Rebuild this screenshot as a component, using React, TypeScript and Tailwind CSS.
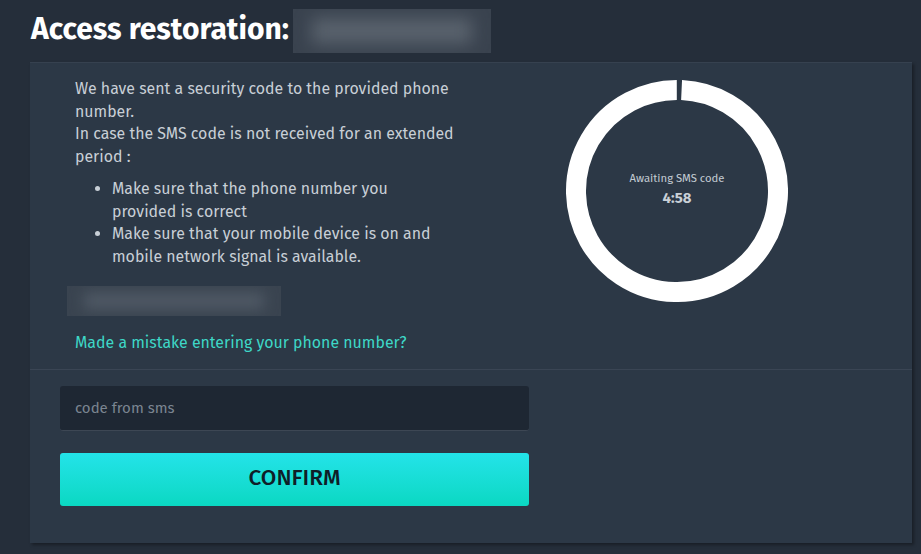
import React from "react";

function Ring() {
  const size = 222;
  const c = size / 2;
  const r = 101;
  const a = (2.6 * Math.PI) / 180;
  const sx = c + r * Math.sin(a);
  const sy = c - r * Math.cos(a);
  const ex = c - r * Math.sin(0.002);
  const ey = c - r * Math.cos(0.002);
  return (
    <div className="relative w-[222px] h-[222px]">
      <svg width={size} height={size} viewBox={`0 0 ${size} ${size}`} className="absolute inset-0">
        <path
          d={`M ${sx} ${sy} A ${r} ${r} 0 1 1 ${ex} ${ey}`}
          fill="none"
          stroke="#ffffff"
          strokeWidth={20}
          strokeLinecap="butt"
        />
      </svg>
      <div className="absolute inset-0 flex flex-col items-center justify-center pb-[4px]">
        <div className="text-[11.3px] leading-[14px] text-[#c3cbd3]">Awaiting SMS code</div>
        <div className="text-[15px] leading-[20px] font-bold text-[#c9d0d7] mt-[3px]">4:58</div>
      </div>
    </div>
  );
}

export default function App() {
  return (
    <div
      className="w-[921px] h-[554px] bg-[#252e3a] overflow-hidden"
      style={{ fontFamily: '"Fira Sans", "Open Sans", "Noto Sans", sans-serif' }}
    >
      <div className="h-[62px] flex items-center pl-[31px] pb-[4px]">
        <h1 className="text-[30px] font-bold text-white leading-none">Access restoration:</h1>
        <div className="ml-[4px] w-[198px] h-[44px] bg-[#3a434f] overflow-hidden flex items-center justify-center mt-[4px]">
          <div className="w-[160px] h-[26px] bg-[#58616c] blur-[8px]" />
        </div>
      </div>
      <div className="ml-[30px] w-[882px] h-[481px] bg-[#2c3846] border-t border-[#36414f] shadow-[2px_2px_3px_rgba(0,0,0,0.35)] flex flex-col">
        <div className="flex h-[307px] border-b border-[#3a4554]">
          <div className="w-[470px] pl-[45px] pt-[15px] text-[15.9px] leading-[22.7px] text-[#c8cfd6]">
            <p className="w-[400px]">
              We have sent a security code to the provided phone number.
              <br />
              In case the SMS code is not received for an extended period :
            </p>
            <ul className="list-disc pl-[37px] mt-[9px] w-[367px] marker:text-[#c8cfd6]">
              <li>Make sure that the phone number you provided is correct</li>
              <li>Make sure that your mobile device is on and mobile network signal is available.</li>
            </ul>
            <div className="-ml-[8px] mt-[17px] w-[214px] h-[30px] bg-[#3a4450] overflow-hidden flex items-center justify-center">
              <div className="w-[180px] h-[16px] bg-[#505a66] blur-[7px]" />
            </div>
            <div className="mt-[16px] text-[#3ed7c7]">Made a mistake entering your phone number?</div>
          </div>
          <div className="pl-[66px] pt-[17px]">
            <Ring />
          </div>
        </div>
        <div className="pl-[30px] pt-[16px] flex flex-col gap-[22px]">
          <div className="w-[469px] h-[45px] bg-[#1e2733] rounded-[3px] border-b border-[#3d4754] flex items-center pl-[15px] text-[15px] text-[#7b8591]">
            code from sms
          </div>
          <button className="w-[469px] h-[53px] rounded-[3px] bg-linear-to-b from-[#23e3e9] to-[#0ad8c2] text-[22.5px] font-medium text-[#0f1e28] flex items-center justify-center pb-[4px]">
            CONFIRM
          </button>
        </div>
      </div>
    </div>
  );
}
